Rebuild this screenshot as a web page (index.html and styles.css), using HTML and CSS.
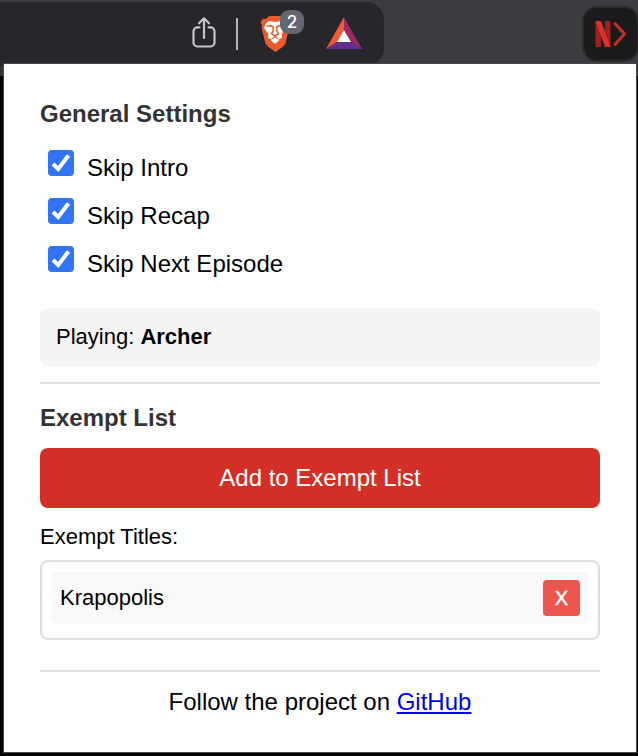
FILE: index.html
```html
<!DOCTYPE html>
<html lang="en">
<head>
<meta charset="utf-8">
<title>Skip settings</title>
<link rel="stylesheet" href="styles.css">
</head>
<body>
<header class="browser-bar">
  <div class="address-pill">
    <svg class="share" width="26" height="34" viewBox="0 0 26 34" fill="none" stroke="#c4c3c7" stroke-width="2.200" stroke-linecap="round" stroke-linejoin="round"><path d="M8.500 12.300H6.500a4 4 0 0 0-4 4V27.500a4 4 0 0 0 4 4h13a4 4 0 0 0 4-4V16.300a4 4 0 0 0-4-4H17.500M13 23V3.500M8 8.300l5-5 5 5"/></svg>
    <span class="separator"></span>
    <span class="shield">
      <svg width="30" height="37" viewBox="0 0 30 37"><path fill="#ec5a29" d="M9 1h12l3 3 3-.5 2.500 4-1 3 .5 2-3.500 16-3 3.500-7 5-7-5-3-3.500L1.500 12.500l.5-2-1.500-3 2.500-4 3 .5z"/><path fill="#fff" d="M8.500 6l6.500 1 6.500-1 3 3 1.500 4-4.500 6 .5 4-3 1-4-3-4 3-3-1 .5-4L4 13l1.500-4zM15 22.500l4.500 2.500-4.500 4-4.500-4z"/><path fill="none" stroke="#ec5a29" stroke-width="1.500" d="M6.500 11l4.500-.3 2 1.300M23.500 11l-4.500-.3-2 1.300M13.500 11.500l-.5 5-1.500 2 3.500 2.500 3.500-2.500-1.500-2-.5-5M15 21v2"/></svg>
      <span class="count">2</span>
    </span>
    <svg class="triangle" width="36" height="32" viewBox="0 0 36 32"><path fill="#f05a35" d="M18 0v13l-7 12L0 32z"/><path fill="#942b62" d="M18 0v13l7 12 11 7z"/><path fill="#652f91" d="M0 32l11-7h14l11 7z"/><path fill="#fff" d="M18 13l7 12H11z"/></svg>
  </div>
  <div class="extension">
    <svg width="32" height="28" viewBox="0 0 32 28"><path fill="#9f2020" d="M.5 1h5.500v26H.5zM10 1h5.500v26H10z"/><path fill="#df3029" d="M.5 1H6l9.500 26H10z"/><path fill="none" stroke="#c92d28" stroke-width="3" stroke-linecap="round" stroke-linejoin="round" d="M20 3.500L29.500 14 20 24.500"/></svg>
  </div>
</header>
<main class="popup">
  <h2>General Settings</h2>
  <div class="options">
    <label><span class="check"><svg width="26" height="26" viewBox="0 0 26 26"><path d="M5 14l5.200 5L20.500 5.500"/></svg></span>Skip Intro</label>
    <label><span class="check"><svg width="26" height="26" viewBox="0 0 26 26"><path d="M5 14l5.200 5L20.500 5.500"/></svg></span>Skip Recap</label>
    <label><span class="check"><svg width="26" height="26" viewBox="0 0 26 26"><path d="M5 14l5.200 5L20.500 5.500"/></svg></span>Skip Next Episode</label>
  </div>
  <p class="playing">Playing: <b>Archer</b></p>
  <hr>
  <h2 class="exempt-heading">Exempt List</h2>
  <button class="add">Add to Exempt List</button>
  <p class="list-label">Exempt Titles:</p>
  <ul class="titles">
    <li>Krapopolis<button class="remove">X</button></li>
  </ul>
  <hr>
  <footer>Follow the project on <a href="#">GitHub</a></footer>
</main>
</body>
</html>
```
FILE: styles.css
```css
* {
  box-sizing: border-box;
}

body {
  margin: 0;
  width: 638px;
  height: 756px;
  overflow: hidden;
  background: #000;
  color: #000;
  font-family: "Liberation Sans", Arial, sans-serif;
  font-size: 24px;
}

.browser-bar {
  display: flex;
  justify-content: space-between;
  height: 76px;
  padding-top: 2px;
  background: linear-gradient(#3c3b40 66px, #343435 66px);
}

.address-pill {
  display: flex;
  width: 384px;
  height: 64px;
  padding-left: 191px;
  background: #27262b;
  border-radius: 0 18px 18px 0;
}

.share {
  margin-top: 13px;
}

.separator {
  width: 2px;
  height: 32px;
  margin: 16px 0 0 19px;
  background: #b5b4b8;
}

.shield {
  position: relative;
  width: 30px;
  height: 37px;
  margin: 13px 0 0 22px;
}

.shield svg {
  display: block;
}

.count {
  position: absolute;
  top: -5px;
  left: 20px;
  width: 24px;
  height: 24px;
  border-radius: 9px;
  background: #646773;
  color: #fff;
  font: 500 17px/24px Inter, sans-serif;
  text-align: center;
}

.triangle {
  margin: 15px 0 0 36px;
}

.extension {
  display: flex;
  width: 57px;
  height: 56px;
  margin: 4px -1px 0 0;
  padding: 12px 0 0 11px;
  border: 2px solid #2b2b2d;
  border-radius: 15px;
  background: #1b1b1b;
}

.popup {
  position: relative;
  width: 634px;
  height: 690px;
  margin: -13px 0 0 3px;
  padding: 36px;
  border: 1px solid #47474a;
  background: #fff;
}

h2 {
  margin: 0;
  color: #333;
  font-size: 24px;
  line-height: 28px;
}

.options {
  display: flex;
  flex-direction: column;
  gap: 20px;
  margin: 22px 0 0 8px;
}

label {
  display: flex;
  gap: 13px;
  height: 28px;
  line-height: 36px;
}

.check {
  width: 26px;
  height: 26px;
  border-radius: 4px;
  background: #3174f5;
}

.check svg {
  display: block;
  fill: none;
  stroke: #fff;
  stroke-width: 4;
}

.playing {
  height: 58px;
  margin: 34px 0 16px;
  padding: 0 16px;
  border-radius: 8px;
  background: #f4f4f4;
  font-size: 22px;
  line-height: 57px;
}

hr {
  height: 2px;
  margin: 0;
  border: 0;
  background: #ddd;
}

.exempt-heading {
  margin-top: 20px;
}

button {
  padding: 0;
  border: 0;
  color: #fff;
  font-family: inherit;
}

.add {
  display: block;
  width: 100%;
  height: 60px;
  margin-top: 16px;
  border-radius: 8px;
  background: #d32f27;
  font-size: 24px;
}

.list-label {
  margin: 16px 0 0;
  font-size: 22px;
  line-height: 26px;
}

.titles {
  height: 80px;
  margin: 10px 0 30px;
  padding: 10px;
  border: 2px solid #ddd;
  border-radius: 8px;
  list-style: none;
}

.titles li {
  display: flex;
  align-items: center;
  justify-content: space-between;
  height: 52px;
  padding: 0 8px;
  border-radius: 6px;
  background: #f9f9f9;
  font-size: 22px;
}

.remove {
  width: 37px;
  height: 36px;
  border-radius: 4px;
  background: #ed544d;
  font-size: 20px;
  -webkit-text-stroke: 0.5px #fff;
}

footer {
  margin-top: 16px;
  line-height: 28px;
  text-align: center;
}

a {
  color: #0000ee;
}
```
